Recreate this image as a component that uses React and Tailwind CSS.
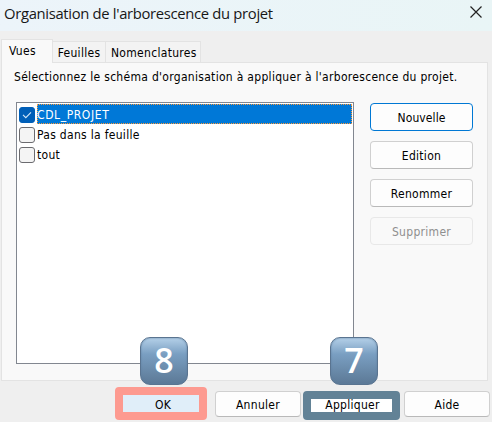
import React from "react";

const uiFont = "font-['DejaVu_Sans_Condensed','DejaVu_Sans',sans-serif] [font-stretch:condensed]";

function SideButton({ children, tone = "normal", track = "tracking-[0.3px]" }) {
  const tones = {
    normal: "border-[#d0d0d0] border-b-[#b9b9b9] bg-[#fdfdfd] text-black",
    active: "border-[#0078d4] bg-[#fdfdfd] text-black",
    disabled: "border-[#e8e8e8] bg-[#f9f9f9] text-[#8f8f8f]",
  };
  return (
    <button className={`flex h-7 w-[103px] items-center justify-center rounded-[4px] border pt-px ${tones[tone]} ${track}`}>
      {children}
    </button>
  );
}

function Row({ label, checked }) {
  return (
    <div className="flex h-5 items-center">
      <span
        className={`mt-px ml-0.5 flex size-4 shrink-0 items-center justify-center rounded-[3px] border ${
          checked ? "border-[#005fb8] bg-[#005fb8]" : "border-[#6b6b6f] bg-[#f4f4f4]"
        }`}
      >
        {checked && (
          <svg viewBox="0 0 10 8" className="h-2 w-2.5" fill="none" stroke="#d5e8f8" strokeWidth="1.1">
            <path d="M1 3.8 3.8 6.6 9 1.4" />
          </svg>
        )}
      </span>
      <span
        className={`ml-0.5 flex h-5 flex-1 items-center border border-dotted pt-px ${
          checked ? "mr-px border-[#ff9a38] bg-[#0078d7] tracking-[0.6px] text-white" : "border-transparent"
        }`}
      >
        <span className="-ml-px">{label}</span>
      </span>
    </div>
  );
}

function Keycap({ digit, place }) {
  return (
    <div
      className={`absolute flex size-12 items-center justify-center rounded-[10px] border border-[#5a7490] bg-linear-to-b from-[#b4d0e8] via-[#7a9fc2] via-35% to-[#5c7996] pb-[3px] font-['Open_Sans',sans-serif] text-[34px] leading-none font-semibold tracking-normal text-white shadow-[inset_0_0_2px_#5d7f9f] [font-stretch:normal] ${place}`}
    >
      {digit}
    </div>
  );
}

export default function App() {
  return (
    <div className={`relative flex h-[422px] w-[492px] flex-col overflow-hidden bg-[#efefef] text-[12px] leading-none tracking-[0.3px] whitespace-nowrap text-black ${uiFont}`}>
      <header className="flex h-[31px] shrink-0 items-start justify-between bg-linear-to-r from-[#ecf4fa] to-[#e9f5f6] pr-[9px] pl-1">
        <h1 className="mt-[3px] font-['Open_Sans',sans-serif] text-[14.8px] leading-5 font-normal tracking-[-0.32px] text-[#171717] [font-stretch:normal]">
          Organisation de l'arborescence du projet
        </h1>
        <svg viewBox="0 0 14 14" className="mt-[5px] size-3.5" fill="none" stroke="#222" strokeWidth="1.2">
          <path d="m1.5 1.5 11 11m0-11-11 11" />
        </svg>
      </header>

      <nav className="relative z-10 -mb-px ml-px flex h-8 shrink-0 items-end pt-2">
        <div className="flex h-6 w-[52px] justify-start border border-b-0 border-[#e3e3e3] bg-[#f9f9f9] pt-[5px] pl-[7px]">Vues</div>
        <div className="flex h-[22px] w-[53px] justify-center border border-l-0 border-[#e3e3e3] bg-[#f3f3f3] pt-[5px]">Feuilles</div>
        <div className="flex h-[22px] w-[95px] border border-l-0 border-[#e3e3e3] bg-[#f3f3f3] pt-[5px] pl-[5px]">Nomenclatures</div>
      </nav>

      <main className="ml-px h-[319px] w-[487px] shrink-0 border border-[#e3e3e3] bg-[#f9f9f9] pl-[14px]">
        <p className="h-[39px] pt-[8px]">
          <span className="-ml-0.5">Sélectionnez le schéma d'organisation à appliquer à l'arborescence du projet.</span>
        </p>
        <div className="flex gap-4">
          <div className="h-[262px] w-[338px] border border-[#828790] bg-white pt-px">
            <Row label="CDL_PROJET" checked />
            <Row label="Pas dans la feuille" />
            <Row label="tout" />
          </div>
          <div className="flex flex-col gap-2.5 pt-px">
            <SideButton tone="active" track="tracking-[0.1px]">Nouvelle</SideButton>
            <SideButton>Edition</SideButton>
            <SideButton>Renommer</SideButton>
            <SideButton tone="disabled">Supprimer</SideButton>
          </div>
        </div>
      </main>

      <footer className="flex items-start pt-1.5 pl-[115px]">
        <button className="flex h-[33px] w-[92px] items-center justify-center rounded-[4px] border-8 border-[#fd9a90] bg-[#e0eef9]">
          <span className="mt-0.5 ml-1">OK</span>
        </button>
        <button className="mt-1 ml-2 flex h-[26px] w-[86px] items-center justify-center rounded-[4px] border border-[#d0d0d0] border-b-[#b9b9b9] bg-[#fdfdfd] pt-px">Annuler</button>
        <button className="mt-1 ml-0.5 flex h-[29px] w-[97px] items-center justify-center rounded-[4px] border-8 border-[#628296] bg-white pl-0.5">
          <span className="-mt-0.5">Appliquer</span>
        </button>
        <button className="mt-1 ml-1 flex h-[26px] w-[86px] items-center justify-center rounded-[4px] border border-[#d0d0d0] border-b-[#b9b9b9] bg-[#fdfdfd] pt-px">Aide</button>
      </footer>

      <Keycap digit="8" place="top-[337px] left-[140px]" />
      <Keycap digit="7" place="top-[337px] left-[330px]" />
    </div>
  );
}
